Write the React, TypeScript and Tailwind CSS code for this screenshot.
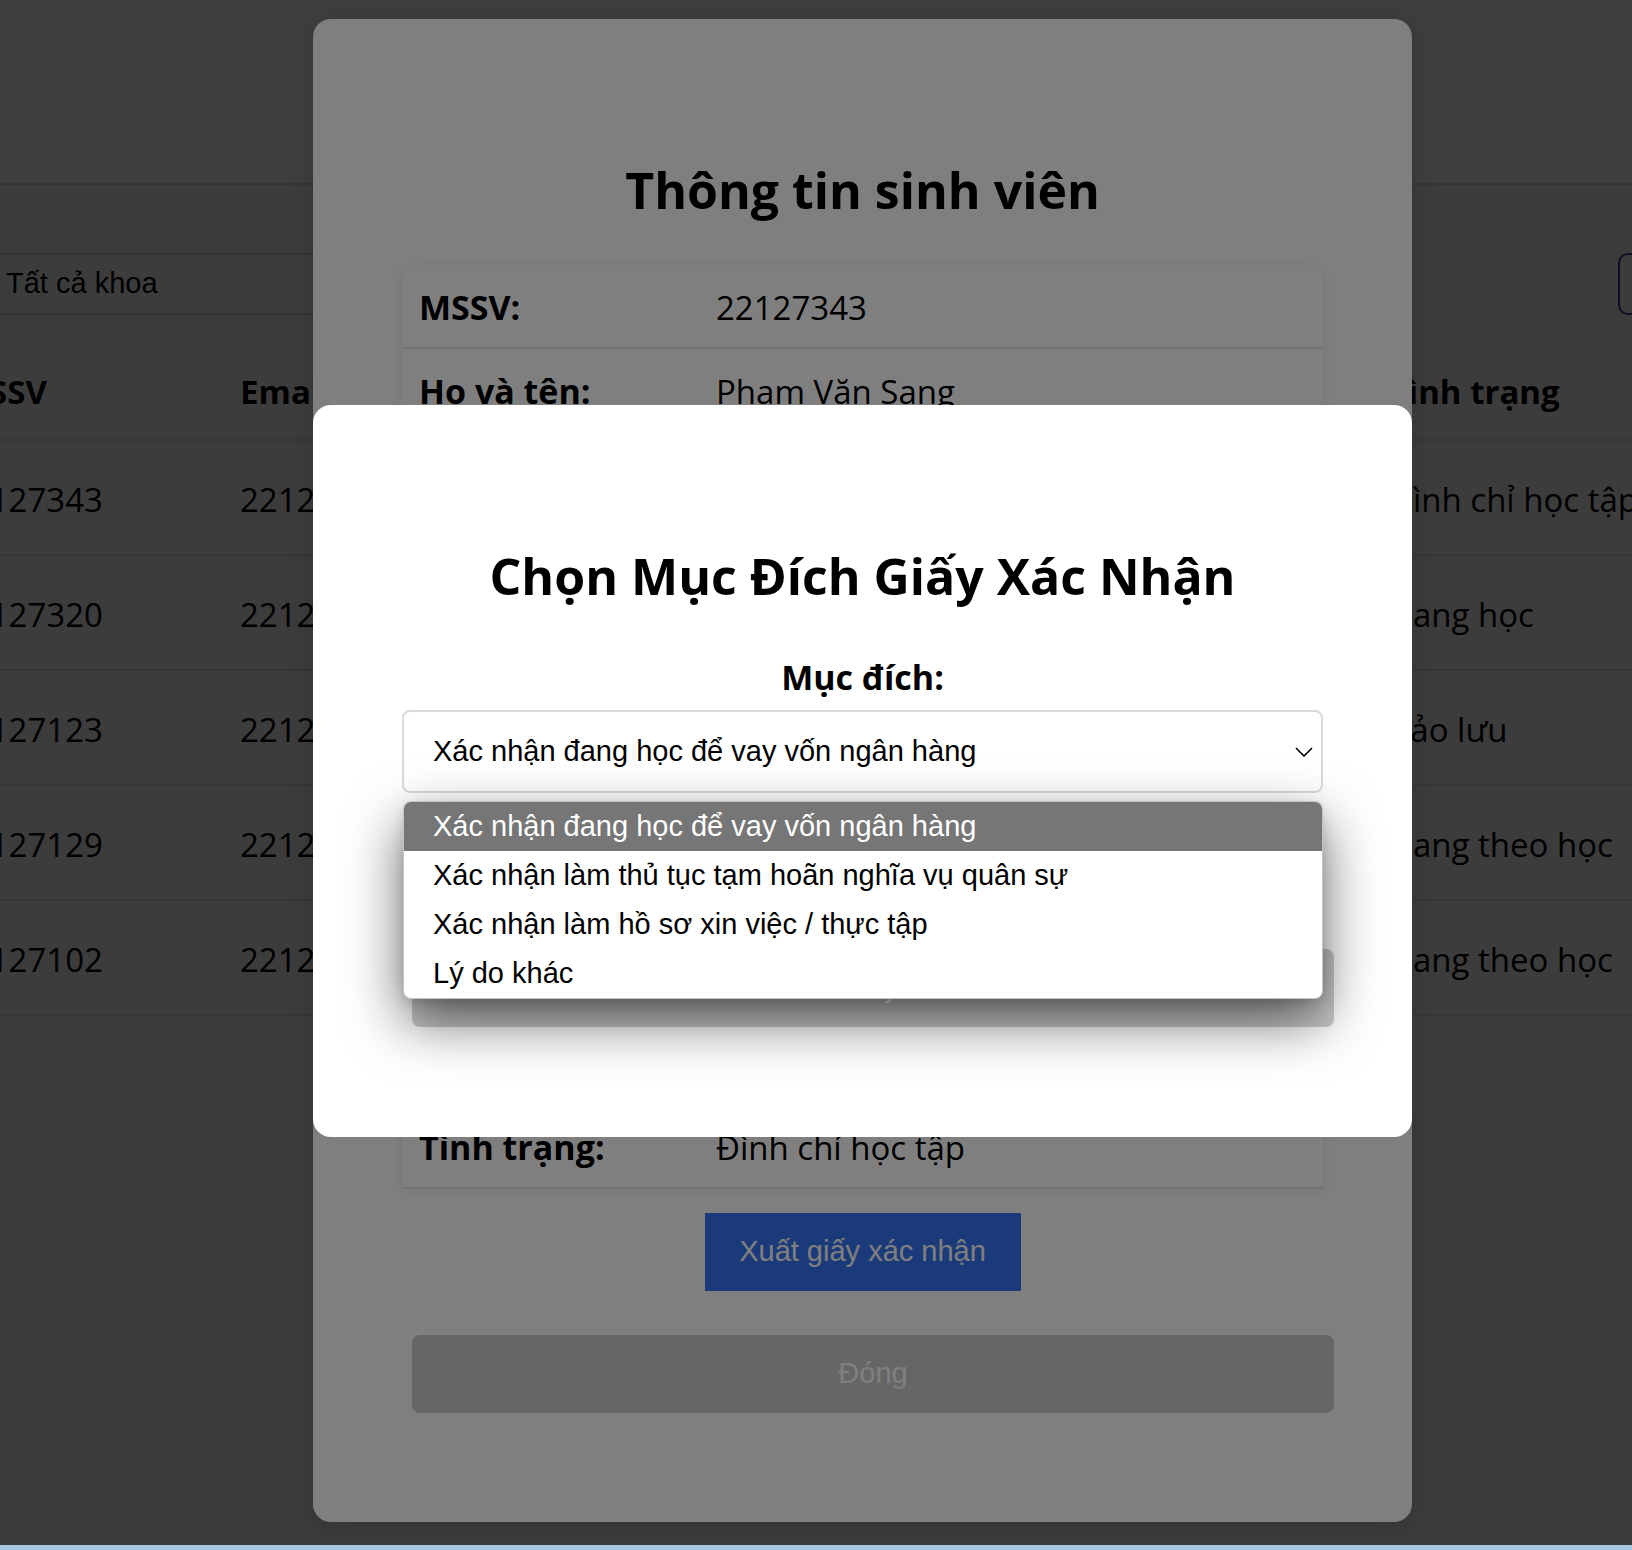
import React from "react";

const students = [
  { mssv: "22127343", email: "22127343@student.hcmus.edu.vn", name: "Phạm Văn Sang", khoa: "Công nghệ thông tin", status: "Đình chỉ học tập" },
  { mssv: "22127320", email: "22127320@student.hcmus.edu.vn", name: "Nguyễn Văn An", khoa: "Công nghệ thông tin", status: "Đang học" },
  { mssv: "22127123", email: "22127123@student.hcmus.edu.vn", name: "Trần Thị Bình", khoa: "Toán - Tin học", status: "Bảo lưu" },
  { mssv: "22127129", email: "22127129@student.hcmus.edu.vn", name: "Lê Minh Châu", khoa: "Vật lý", status: "Đang theo học" },
  { mssv: "22127102", email: "22127102@student.hcmus.edu.vn", name: "Võ Thành Đạt", khoa: "Hóa học", status: "Đang theo học" },
];

const info: [string, string][] = [
  ["MSSV:", "22127343"],
  ["Họ và tên:", "Phạm Văn Sang"],
  ["Ngày sinh:", "12/05/2004"],
  ["Giới tính:", "Nam"],
  ["Khoa:", "Công nghệ thông tin"],
  ["Khóa:", "2022"],
  ["Chương trình:", "Chính quy"],
  ["Địa chỉ:", "TP. Hồ Chí Minh"],
  ["Email:", "22127343@student.hcmus.edu.vn"],
  ["Số điện thoại:", "0901234567"],
  ["Tình trạng:", "Đình chỉ học tập"],
];

const options = [
  "Xác nhận đang học để vay vốn ngân hàng",
  "Xác nhận làm thủ tục tạm hoãn nghĩa vụ quân sự",
  "Xác nhận làm hồ sơ xin việc / thực tập",
  "Lý do khác",
];

const cols = "grid grid-cols-[288px_476px_350px_323px_420px]";

export default function App() {
  return (
    <div className="flex h-[1550px] w-[1632px] flex-col overflow-hidden font-['Open_Sans',sans-serif] text-black">
      <div className="relative h-[1545px] overflow-hidden bg-[#f0f0f0]">
        {/* background page */}
        <header className="h-[185px] border-b-2 border-[#d6d6d6] bg-[#f4f8ff]" />
        <div className="mt-[68px] flex items-center">
          <div className="-ml-[200px] flex h-[62px] w-[700px] items-center border-2 border-[#c8c8c8] bg-[#f0f0f0] pl-[204px] font-['Liberation_Sans',Arial,sans-serif] text-[29px]">
            Tất cả khoa
          </div>
          <div className="-mr-[100px] ml-auto h-[62px] w-[114px] rounded-[10px] border-2 border-[#3a3aa0]" />
        </div>
        <div className="mt-[30px] -ml-[64px] w-[1860px] whitespace-nowrap text-[33px]">
          <div className={`${cols} h-[96px] items-center border-b-2 border-[#dadada] font-bold`}>
            <div className="pl-[22px] pr-4">MSSV</div>
            <div className="px-4">Email</div>
            <div className="px-4">Họ và tên</div>
            <div className="px-4">Khoa</div>
            <div className="px-4">Tình trạng</div>
          </div>
          {students.map((s) => (
            <div key={s.mssv} className={`${cols} h-[115px] items-center border-b-2 border-[#dadada] pt-[4px]`}>
              <div className="px-4">{s.mssv}</div>
              <div className="overflow-hidden px-4">{s.email}</div>
              <div className="px-4">{s.name}</div>
              <div className="px-4">{s.khoa}</div>
              <div className="px-4">{s.status}</div>
            </div>
          ))}
        </div>

        {/* first overlay + student info modal */}
        <div className="absolute inset-0 bg-black/50" />
        <div className="absolute left-[313px] top-[19px] w-[1099px] rounded-[18px] bg-white px-[89px] pb-[109px] pt-[142px] shadow-[0_4px_24px_rgba(0,0,0,0.15)]">
          <h2 className="text-center text-[50px] font-bold leading-[58px]">Thông tin sinh viên</h2>
          <div className="mt-[46px] overflow-hidden rounded-t-[12px] shadow-[0_2px_14px_rgba(0,0,0,0.08)]">
            {info.map(([label, value]) => (
              <div key={label} className="flex h-[84px] items-center border-b-2 border-[#e6e6e6] px-[17px] pt-[3px] text-[33px]">
                <div className="w-[297px] shrink-0 text-[34px] font-bold">{label}</div>
                <div>{value}</div>
              </div>
            ))}
          </div>
          <button className="mx-auto mt-[24px] flex h-[78px] w-[316px] items-center justify-center bg-[#3674f4] font-['Liberation_Sans',Arial,sans-serif] text-[29px] text-white">
            Xuất giấy xác nhận
          </button>
          <button className="-mr-[11px] ml-[10px] mt-[44px] flex h-[78px] w-[922px] items-center justify-center rounded-[8px] bg-[#cccccc] font-['Liberation_Sans',Arial,sans-serif] text-[29px] text-white">
            Đóng
          </button>
        </div>

        {/* second overlay + purpose modal */}
        <div className="absolute inset-0 bg-black/50" />
        <div className="absolute left-[313px] top-[405px] h-[732px] w-[1099px] rounded-[18px] bg-white px-[89px] pt-[142px]">
          <h2 className="text-center text-[50px] font-bold leading-[58px]">Chọn Mục Đích Giấy Xác Nhận</h2>
          <div className="mt-[47px] text-center text-[34px] font-bold leading-[50px]">Mục đích:</div>
          <div className="mt-[8px] flex h-[83px] items-center justify-between rounded-[8px] border-2 border-[#d9d9d9] pl-[29px] pr-[8px] font-['Liberation_Sans',Arial,sans-serif] text-[29px]">
            <span>{options[0]}</span>
            <svg width="18" height="10" viewBox="0 0 18 10" fill="none">
              <polyline points="1,1 9,9 17,1" stroke="#000" strokeWidth="1.6" />
            </svg>
          </div>
          <button className="mx-auto mt-[24px] flex h-[78px] w-[316px] items-center justify-center bg-[#3674f4] font-['Liberation_Sans',Arial,sans-serif] text-[29px] text-white">
            Xác nhận
          </button>
          <button className="-mr-[11px] ml-[10px] mt-[54px] flex h-[78px] w-[922px] items-center justify-center rounded-[8px] bg-[#cccccc] font-['Liberation_Sans',Arial,sans-serif] text-[29px] text-white">
            Hủy
          </button>

          {/* native select popup */}
          <div className="absolute left-[90px] top-[396px] w-[920px] overflow-hidden rounded-[8px] border border-[#c4c4c4] bg-white font-['Liberation_Sans',Arial,sans-serif] text-[29px] shadow-[0_22px_56px_rgba(0,0,0,0.6),0_4px_12px_rgba(0,0,0,0.12)]">
            {options.map((o, i) => (
              <div
                key={o}
                className={
                  i === 0
                    ? "flex h-[49px] items-center bg-[#767676] px-[29px] text-white"
                    : "flex h-[49px] items-center px-[29px] text-black"
                }
              >
                {o}
              </div>
            ))}
          </div>
        </div>
      </div>
      <div className="h-[5px] bg-[#a9c7dc]" />
    </div>
  );
}
